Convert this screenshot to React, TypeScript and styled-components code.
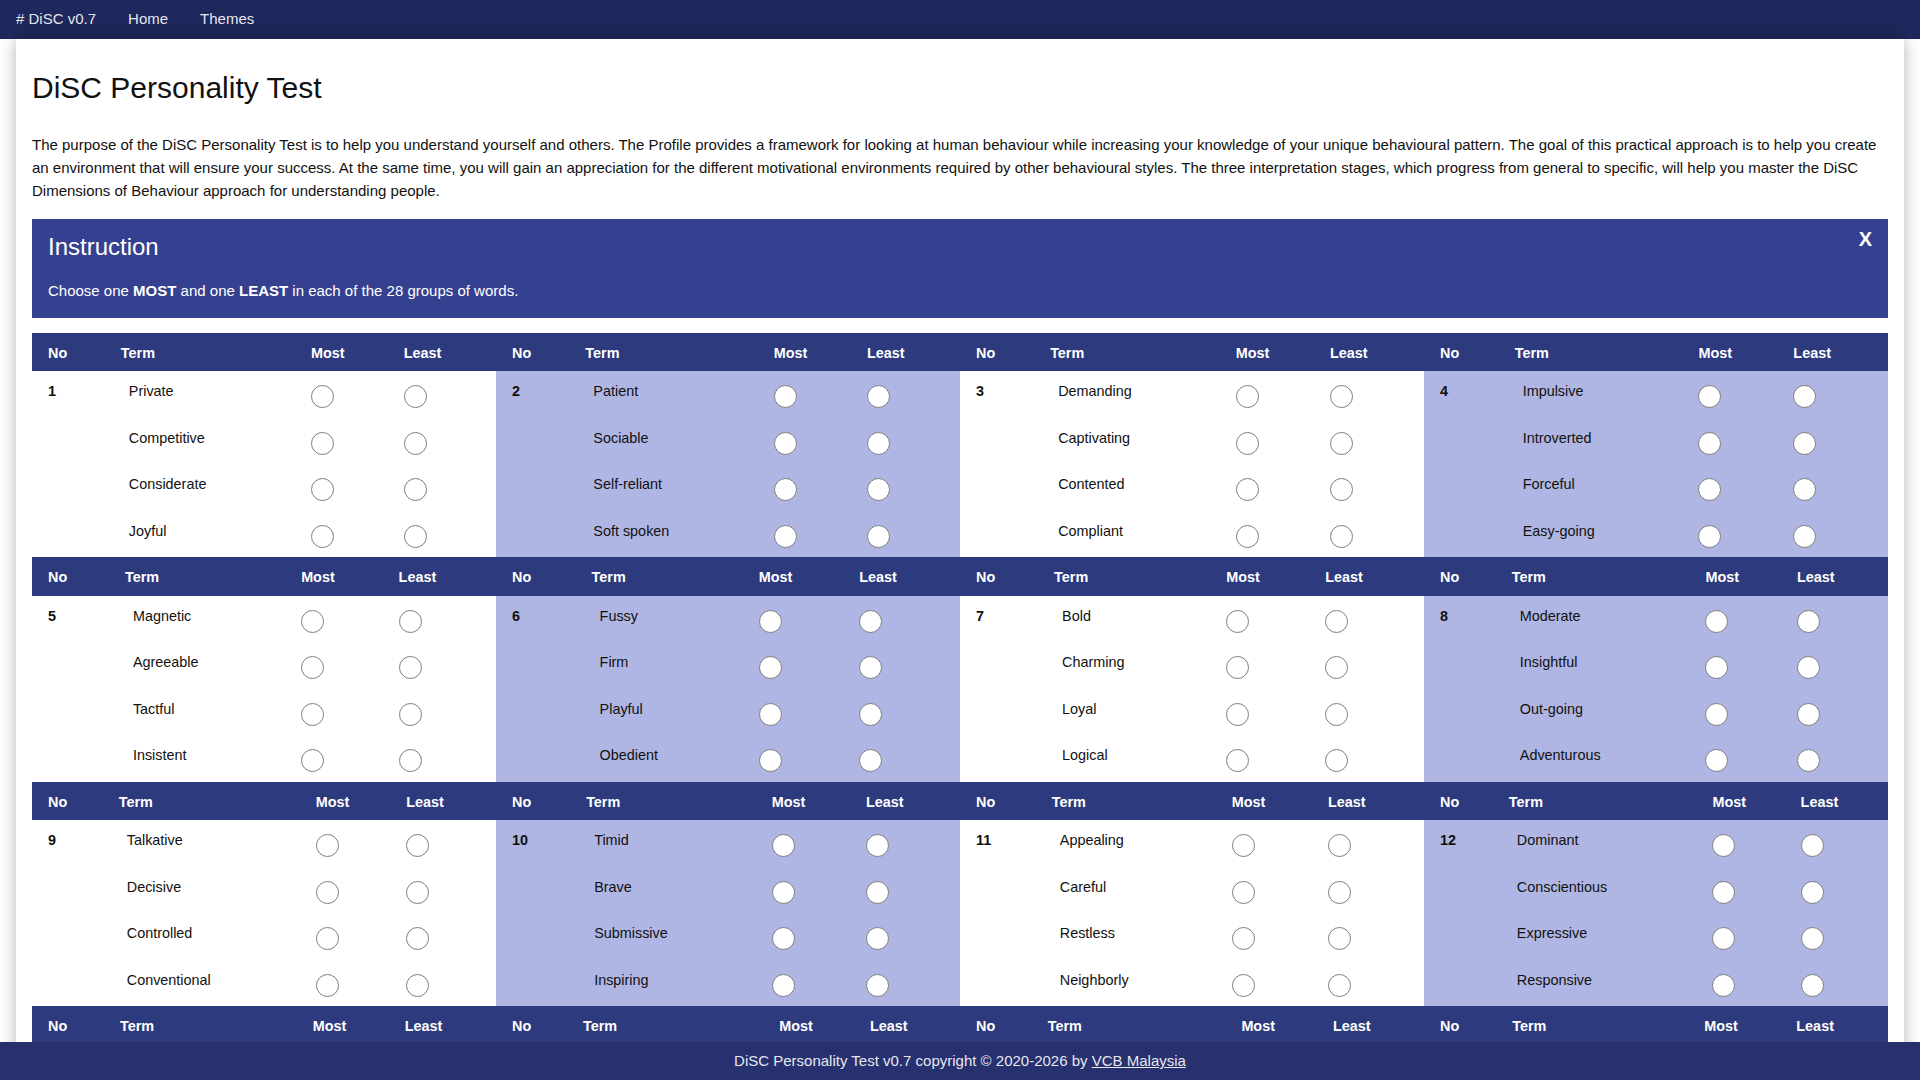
import React from "react";
import styled, {createGlobalStyle} from "styled-components";

// four words per group, 28 groups in total
const GROUPS: string[][] = [
    ["Private", "Competitive", "Considerate", "Joyful"],
    ["Patient", "Sociable", "Self-reliant", "Soft spoken"],
    ["Demanding", "Captivating", "Contented", "Compliant"],
    ["Impulsive", "Introverted", "Forceful", "Easy-going"],
    ["Magnetic", "Agreeable", "Tactful", "Insistent"],
    ["Fussy", "Firm", "Playful", "Obedient"],
    ["Bold", "Charming", "Loyal", "Logical"],
    ["Moderate", "Insightful", "Out-going", "Adventurous"],
    ["Talkative", "Decisive", "Controlled", "Conventional"],
    ["Timid", "Brave", "Submissive", "Inspiring"],
    ["Appealing", "Careful", "Restless", "Neighborly"],
    ["Dominant", "Conscientious", "Expressive", "Responsive"],
    ["Lighthearted", "Aggressive", "Obliging", "Composed"],
    ["Strong-willed", "Gentle", "Persistent", "Cheerful"],
    ["Self-assured", "Tolerant", "Animated", "Precise"],
    ["Sympathetic", "Forthright", "Convincing", "Reserved"],
    ["Cooperative", "Outspoken", "Methodical", "Lively"],
    ["Diplomatic", "Determined", "Cautious", "Popular"],
    ["Polite", "Enthusiastic", "Stubborn", "Orderly"],
    ["Competent", "Peaceful", "Charismatic", "Daring"],
    ["Kind", "Persuasive", "Accurate", "Spontaneous"],
    ["Good-mixer", "Humble", "Exacting", "Vigorous"],
    ["Trusting", "Fearless", "Sincere", "Analytical"],
    ["Willing", "Eloquent", "Self-controlled", "Relaxed"],
    ["Generous", "Courageous", "Organized", "Easy-mannered"],
    ["Thoughtful", "Inspirational", "Resolute", "Gracious"],
    ["Friendly", "Assertive", "Perfectionist", "Calm"],
    ["Encouraging", "Restrained", "Ambitious", "Attentive"],
];

const GlobalStyle = createGlobalStyle`
    html {
        scrollbar-width: none;
    }
    html::-webkit-scrollbar {
        display: none;
    }
    body {
        margin: 0;
        background: #fff;
        color: #111;
        font-family: "Liberation Sans", Arial, sans-serif;
        font-size: 15px;
        line-height: 1.6;
    }
`;

const NavBar = styled.nav`
    display: flex;
    align-items: center;
    box-sizing: border-box;
    height: 39px;
    padding-bottom: 1px;
    background: #1f285c;
`;

const NavLink = styled.a`
    padding: 0 16px;
    color: rgba(255, 255, 255, 0.9);
    font-size: 15px;
    text-decoration: none;
    cursor: pointer;
`;

const Card = styled.main`
    margin: 0 16px;
    padding: 16px 16px 60px;
    background: #fff;
    box-shadow: 0 0 16px rgba(0, 0, 0, 0.3);
`;

const Title = styled.h1`
    margin: 15px 0 27px;
    font-size: 30px;
    font-weight: 400;
    line-height: 1.2;
`;

const Intro = styled.p`
    margin: 0 0 17px;
    line-height: 23px;
`;

const InstructionBox = styled.section`
    position: relative;
    padding: 14px 16px 16px;
    background: #354190;
    color: #fff;
`;

const InstructionTitle = styled.h3`
    margin: 0 0 17px;
    font-size: 24px;
    font-weight: 400;
    line-height: 1.2;
`;

const InstructionText = styled.p`
    margin: 0;
    line-height: 23px;
`;

const CloseButton = styled.span`
    position: absolute;
    top: 8px;
    right: 16px;
    font-size: 20px;
    font-weight: 700;
    line-height: 1.2;
    cursor: pointer;
`;

const GroupGrid = styled.div`
    display: grid;
    grid-template-columns: repeat(4, 1fr);
    margin-top: 15px;
    font-size: 14.4px;
`;

const GroupTable = styled.table<{ $shaded: boolean }>`
    width: 100%;
    border-collapse: collapse;
    background: ${(p) => (p.$shaded ? "#b0b6e3" : "#fff")};
`;

const HeadCell = styled.th<{ $first?: boolean }>`
    padding: 9px 8px 6.5px ${(p) => (p.$first ? "16px" : "8px")};
    background: #2d3a7e;
    color: #fff;
    font-weight: 700;
    text-align: left;
    line-height: 23px;
`;

const NumCell = styled.td`
    padding: 9px 8px 14.5px 16px;
    font-weight: 700;
    vertical-align: top;
    line-height: 23px;
`;

const TermCell = styled.td`
    padding: 9px 8px 14.5px 16px;
    vertical-align: top;
    line-height: 23px;
    white-space: nowrap;
`;

const ChoiceCell = styled.td`
    padding: 9px 8px 9.5px;
    vertical-align: top;
`;

const Radio = styled.input.attrs({type: "radio"})`
    appearance: none;
    display: block;
    box-sizing: border-box;
    width: 23px;
    height: 23px;
    margin: 5px 0 0;
    border: 1px solid #7d7d7d;
    border-radius: 50%;
    background: #fff;
    cursor: pointer;

    &:checked {
        background: #2d3a7e;
        box-shadow: inset 0 0 0 5px #fff;
    }
`;

const Footer = styled.footer`
    position: fixed;
    left: 0;
    right: 0;
    bottom: 0;
    padding: 7px 0 8px;
    background: #283170;
    color: rgba(255, 255, 255, 0.9);
    text-align: center;
    line-height: 23px;
`;

const FooterLink = styled.a`
    color: inherit;
    text-decoration: underline;
`;

const Group: React.FC<{ no: number; terms: string[] }> = ({no, terms}) => {
    return (
        <GroupTable $shaded={no % 2 === 0}>
            <thead>
            <tr>
                <HeadCell $first>No</HeadCell>
                <HeadCell>Term</HeadCell>
                <HeadCell>Most</HeadCell>
                <HeadCell>Least</HeadCell>
            </tr>
            </thead>
            <tbody>
            {terms.map((term, i) => (
                <tr key={term}>
                    {i === 0 && <NumCell rowSpan={4}>{no}</NumCell>}
                    <TermCell>{term}</TermCell>
                    <ChoiceCell><Radio name={`most-${no}`} value={term}/></ChoiceCell>
                    <ChoiceCell><Radio name={`least-${no}`} value={term}/></ChoiceCell>
                </tr>
            ))}
            </tbody>
        </GroupTable>
    );
};

const App: React.FC = () => {
    return (
        <>
            <GlobalStyle/>
            <NavBar>
                <NavLink># DiSC v0.7</NavLink>
                <NavLink>Home</NavLink>
                <NavLink>Themes</NavLink>
            </NavBar>
            <Card>
                <Title>DiSC Personality Test</Title>
                <Intro>
                    The purpose of the DiSC Personality Test is to help you understand yourself and others. The
                    Profile provides a framework for looking at human behaviour while increasing your knowledge of
                    your unique behavioural pattern. The goal of this practical approach is to help you create an
                    environment that will ensure your success. At the same time, you will gain an appreciation for
                    the different motivational environments required by other behavioural styles. The three
                    interpretation stages, which progress from general to specific, will help you master the DiSC
                    Dimensions of Behaviour approach for understanding people.
                </Intro>
                <InstructionBox>
                    <CloseButton>X</CloseButton>
                    <InstructionTitle>Instruction</InstructionTitle>
                    <InstructionText>
                        Choose one <b>MOST</b> and one <b>LEAST</b> in each of the 28 groups of words.
                    </InstructionText>
                </InstructionBox>
                <GroupGrid>
                    {GROUPS.map((terms, i) => (
                        <Group key={i} no={i + 1} terms={terms}/>
                    ))}
                </GroupGrid>
            </Card>
            <Footer>
                DiSC Personality Test v0.7 copyright © 2020-2026 by <FooterLink>VCB Malaysia</FooterLink>
            </Footer>
        </>
    );
};

export default App;
